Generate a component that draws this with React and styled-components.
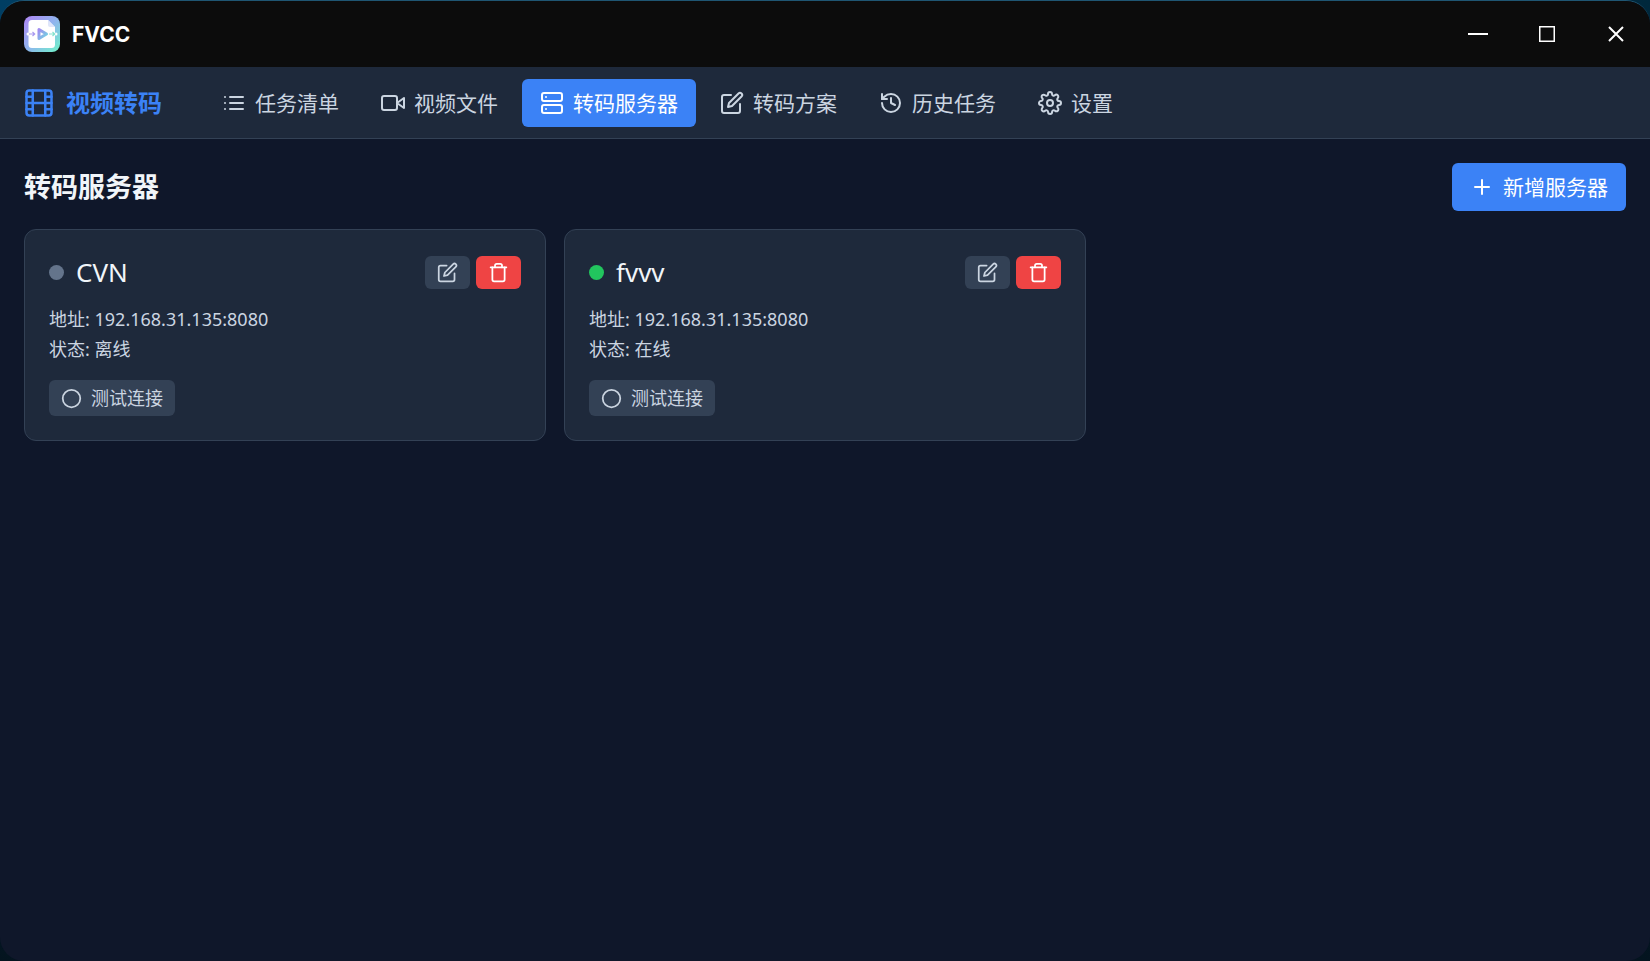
import React, { useState } from "react";
import styled, { createGlobalStyle } from "styled-components";
import { History } from "lucide-react";
import {
  FiCircle,
  FiEdit,
  FiFilm,
  FiList,
  FiPlus,
  FiServer,
  FiSettings,
  FiTrash,
  FiVideo,
} from "react-icons/fi";

const menus = [
  { id: "tasks", label: "任务清单", icon: FiList },
  { id: "files", label: "视频文件", icon: FiVideo },
  { id: "servers", label: "转码服务器", icon: FiServer },
  { id: "presets", label: "转码方案", icon: FiEdit },
  { id: "history", label: "历史任务", icon: History },
  { id: "settings", label: "设置", icon: FiSettings },
];

const servers = [
  { id: 1, name: "CVN", address: "192.168.31.135:8080", online: false },
  { id: 2, name: "fvvv", address: "192.168.31.135:8080", online: true },
];

const AppLogo = () => (
  <svg width="36" height="36" viewBox="0 0 36 36" aria-hidden="true">
    <defs>
      <linearGradient id="logoFrame" x1="0" y1="0" x2="1" y2="1">
        <stop offset="0" stopColor="#b085f5" />
        <stop offset="0.5" stopColor="#8fb4ee" />
        <stop offset="1" stopColor="#6ff5c8" />
      </linearGradient>
      <linearGradient id="logoPlay" x1="0" y1="0" x2="1" y2="1">
        <stop offset="0" stopColor="#a08af0" />
        <stop offset="1" stopColor="#70d8e0" />
      </linearGradient>
    </defs>
    <rect width="36" height="36" rx="8" fill="url(#logoFrame)" />
    <path
      d="M8 4h16l7 7v17.5a3.5 3.5 0 0 1-3.5 3.5h-19.5a3.5 3.5 0 0 1-3.5-3.5v-21a3.5 3.5 0 0 1 3.5-3.5z"
      fill="#fff"
    />
    <path d="M24 4l7 7h-5a2 2 0 0 1-2-2z" fill="#dfe6fa" />
    <circle cx="4" cy="18" r="1.5" fill="#fff" />
    <circle cx="32" cy="18" r="1.5" fill="#fff" />
    <path
      d="M5 18h5.500M8.500 16l2.200 2-2.200 2"
      stroke="#a99af0"
      strokeWidth="1.2"
      fill="none"
    />
    <path
      d="M25 18h6M28.5 16l2.2 2-2.2 2"
      stroke="#86e3cf"
      strokeWidth="1.2"
      fill="none"
    />
    <path
      d="M15 13.5v9l7.5-4.5z"
      fill="#fff"
      stroke="url(#logoPlay)"
      strokeWidth="3"
      strokeLinejoin="round"
    />
  </svg>
);

const ServerCard = ({ server }) => (
  <Card>
    <CardHead>
      <Dot $online={server.online} />
      <Name>{server.name}</Name>
      <IconButton type="button" aria-label="编辑">
        <FiEdit size={21} />
      </IconButton>
      <IconButton type="button" aria-label="删除" $danger>
        <FiTrash size={21} />
      </IconButton>
    </CardHead>
    <Info>
      <p>地址: {server.address}</p>
      <p>状态: {server.online ? "在线" : "离线"}</p>
    </Info>
    <TestButton type="button">
      <FiCircle size={21} />
      测试连接
    </TestButton>
  </Card>
);

const App = () => {
  const [current, setCurrent] = useState("servers");

  return (
    <>
      <GlobalStyle />
      <Window>
        <TitleBar>
          <AppLogo />
          <AppName>FVCC</AppName>
          <WindowButton type="button" aria-label="最小化">
            <svg width="20" height="20" stroke="#fff" strokeWidth="2">
              <path d="M0 10h20" />
            </svg>
          </WindowButton>
          <WindowButton type="button" aria-label="最大化">
            <svg width="20" height="20" fill="none" stroke="#fff" strokeWidth="1.5">
              <rect x="2.75" y="2.75" width="14.5" height="14.5" />
            </svg>
          </WindowButton>
          <WindowButton type="button" aria-label="关闭">
            <svg width="20" height="20" stroke="#fff" strokeWidth="2">
              <path d="M3 3l14 14M17 3L3 17" />
            </svg>
          </WindowButton>
        </TitleBar>

        <Nav>
          <Brand>
            <FiFilm size={30} />
            视频转码
          </Brand>
          {menus.map(({ id, label, icon: Icon }) => (
            <NavButton
              key={id}
              type="button"
              $active={current === id}
              onClick={() => setCurrent(id)}
            >
              <Icon size={24} />
              {label}
            </NavButton>
          ))}
        </Nav>

        <Main>
          <PageHead>
            <Title>转码服务器</Title>
            <AddButton type="button">
              <FiPlus size={24} />
              新增服务器
            </AddButton>
          </PageHead>
          <Grid>
            {servers.map((server) => (
              <ServerCard key={server.id} server={server} />
            ))}
          </Grid>
        </Main>
      </Window>
    </>
  );
};

const GlobalStyle = createGlobalStyle`
  * {
    box-sizing: border-box;
  }
  html {
    background: linear-gradient(90deg, #003e63, #00283c);
  }
  body {
    margin: 0;
    background: linear-gradient(180deg, transparent 40%, #04141f);
    font-family: "Noto Sans", "Noto Sans CJK SC", sans-serif;
    color: #f1f5f9;
  }
  h1, h2, p {
    margin: 0;
  }
  button {
    font-family: inherit;
    border: none;
    cursor: pointer;
  }
`;

const Window = styled.div`
  display: flex;
  flex-direction: column;
  min-height: 100vh;
  border-top: 1px solid #1f5673;
  border-radius: 24px;
  background-color: #0f172a;
  overflow: hidden;
`;

const TitleBar = styled.header`
  display: flex;
  align-items: center;
  height: 66px;
  padding-left: 24px;
  background-color: #0c0c0c;
`;

const AppName = styled.span`
  flex: 1;
  margin-left: 12px;
  font-family: Inter, sans-serif;
  font-size: 21px;
  font-weight: 700;
  color: #fff;
`;

const WindowButton = styled.button`
  display: flex;
  align-items: center;
  justify-content: center;
  width: 69px;
  height: 66px;
  padding: 0;
  background: none;
`;

const Nav = styled.nav`
  display: flex;
  align-items: center;
  gap: 6px;
  padding: 12px 24px 11px;
  border-bottom: 1px solid #334155;
  background-color: #1e293b;
`;

const Brand = styled.div`
  display: flex;
  align-items: center;
  gap: 12px;
  margin-right: 36px;
  font-size: 24px;
  line-height: 36px;
  font-weight: 700;
  color: #3b82f6;
`;

const NavButton = styled.button`
  display: flex;
  align-items: center;
  gap: 9px;
  height: 48px;
  padding: 0 18px;
  border-radius: 6px;
  font-size: 21px;
  line-height: 30px;
  color: ${(props) => (props.$active ? "#fff" : "#cbd5e1")};
  background-color: ${(props) => (props.$active ? "#3b82f6" : "transparent")};
`;

const Main = styled.main`
  flex: 1;
  padding: 24px;
`;

const PageHead = styled.div`
  display: flex;
  align-items: center;
  justify-content: space-between;
  margin-bottom: 18px;
`;

const Title = styled.h1`
  font-size: 27px;
  line-height: 40px;
  font-weight: 700;
`;

const AddButton = styled(NavButton)`
  color: #fff;
  background-color: #3b82f6;
`;

const Grid = styled.div`
  display: grid;
  grid-template-columns: repeat(3, 1fr);
  gap: 18px;
`;

const Card = styled.section`
  padding: 24px;
  border: 1px solid #334155;
  border-radius: 12px;
  background-color: #1e293b;
`;

const CardHead = styled.div`
  display: flex;
  align-items: center;
  gap: 6px;
  margin-bottom: 14px;
`;

const Dot = styled.span`
  width: 15px;
  height: 15px;
  margin-right: 6px;
  border-radius: 50%;
  background-color: ${(props) => (props.$online ? "#22c55e" : "#64748b")};
`;

const Name = styled.h2`
  flex: 1;
  font-size: 26px;
  line-height: 36px;
  font-weight: 400;
`;

const IconButton = styled.button`
  display: flex;
  align-items: center;
  justify-content: center;
  width: 45px;
  height: 33px;
  padding: 0;
  border-radius: 6px;
  color: ${(props) => (props.$danger ? "#fff" : "#cbd5e1")};
  background-color: ${(props) => (props.$danger ? "#ef4444" : "#334155")};
`;

const Info = styled.div`
  margin-bottom: 16px;
  font-size: 18px;
  line-height: 30px;
  color: #cbd5e1;
`;

const TestButton = styled.button`
  display: flex;
  align-items: center;
  gap: 9px;
  height: 36px;
  padding: 0 12px;
  border-radius: 6px;
  font-size: 18px;
  line-height: 27px;
  color: #cbd5e1;
  background-color: #334155;
`;

export default App;
